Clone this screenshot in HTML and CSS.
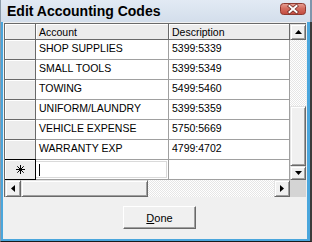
FILE: index.html
```html
<!DOCTYPE html>
<html lang="en">
<head>
	<meta charset="UTF-8">
	<title>Edit Accounting Codes</title>
	<link rel="stylesheet" href="styles.css">
</head>
<body>

<div class="window">
	<div class="titlebar">
		<span class="title">Edit Accounting Codes</span>
		<span class="close">
			<svg width="26" height="12" viewBox="0 0 26 12">
				<defs>
					<linearGradient id="cg" x1="0" y1="0" x2="0" y2="1">
						<stop offset="0" stop-color="#e8a296"/>
						<stop offset="0.45" stop-color="#d46d60"/>
						<stop offset="1" stop-color="#c24a3e"/>
					</linearGradient>
				</defs>
				<rect x="0.5" y="0.5" width="25" height="11" rx="3" fill="url(#cg)" stroke="#8e3a31"/>
				<path d="M9.5 3 L16.5 9 M16.5 3 L9.5 9" stroke="#6b2a24" stroke-width="3.4" stroke-linecap="square"/>
				<path d="M9.5 3 L16.5 9 M16.5 3 L9.5 9" stroke="#fff" stroke-width="2" stroke-linecap="square"/>
			</svg>
		</span>
	</div>

	<div class="frame-outer">
		<div class="frame">

			<div class="grid">
				<div class="grid-main">
					<div class="table">
						<div class="row head">
							<div class="sel"></div>
							<div class="cell">Account</div>
							<div class="cell">Description</div>
						</div>
						<div class="row">
							<div class="sel"></div>
							<div class="cell">SHOP SUPPLIES</div>
							<div class="cell">5399:5339</div>
						</div>
						<div class="row">
							<div class="sel"></div>
							<div class="cell">SMALL TOOLS</div>
							<div class="cell">5399:5349</div>
						</div>
						<div class="row">
							<div class="sel"></div>
							<div class="cell">TOWING</div>
							<div class="cell">5499:5460</div>
						</div>
						<div class="row">
							<div class="sel"></div>
							<div class="cell">UNIFORM/LAUNDRY</div>
							<div class="cell">5399:5359</div>
						</div>
						<div class="row">
							<div class="sel"></div>
							<div class="cell">VEHICLE EXPENSE</div>
							<div class="cell">5750:5669</div>
						</div>
						<div class="row">
							<div class="sel"></div>
							<div class="cell">WARRANTY EXP</div>
							<div class="cell">4799:4702</div>
						</div>
						<div class="row new">
							<div class="sel">
								<svg width="9" height="9" viewBox="0 0 9 9">
									<path d="M4.5 0 V9 M0 4.5 H9 M1.3 1.3 L7.7 7.7 M7.7 1.3 L1.3 7.7" stroke="#000" stroke-width="1"/>
								</svg>
							</div>
							<div class="cell"><div class="edit"><span class="caret"></span></div></div>
							<div class="cell"></div>
						</div>
					</div>

					<div class="vscroll">
						<div class="sbtn up">
							<svg width="7" height="4" viewBox="0 0 7 4"><polygon points="3.5,0 7,4 0,4" fill="#000"/></svg>
						</div>
						<div class="track vtrack1"></div>
						<div class="thumb vthumb"></div>
						<div class="sbtn down">
							<svg width="7" height="4" viewBox="0 0 7 4"><polygon points="0,0 7,0 3.5,4" fill="#000"/></svg>
						</div>
					</div>
				</div>

				<div class="grid-foot">
					<div class="hscroll">
						<div class="sbtn left">
							<svg width="4" height="7" viewBox="0 0 4 7"><polygon points="4,0 4,7 0,3.5" fill="#000"/></svg>
						</div>
						<div class="thumb hthumb"></div>
						<div class="track htrack"></div>
						<div class="sbtn right">
							<svg width="4" height="7" viewBox="0 0 4 7"><polygon points="0,0 4,3.5 0,7" fill="#000"/></svg>
						</div>
					</div>
					<div class="corner"></div>
				</div>
			</div>

			<div class="actions">
				<button class="btn"><u>D</u>one</button>
			</div>

		</div>
	</div>
</div>

</body>
</html>
```

FILE: styles.css
```css
* {
	box-sizing: border-box;
}
body {
	margin: 0;
	font-family: 'Liberation Sans', Arial, sans-serif;
	color: #000;
}
.window {
	width: 312px;
	height: 242px;
	display: flex;
	flex-direction: column;
	background: #f0f0f0;
}
.titlebar {
	height: 22px;
	display: flex;
	align-items: flex-start;
	justify-content: space-between;
	background: linear-gradient(#e2eaf4, #d3deeb);
	border-left: 1px solid #8d9cab;
	border-right: 2px solid #7f95ab;
}
.title {
	font-size: 14px;
	font-weight: bold;
	line-height: 22px;
	padding-left: 6px;
}
.close {
	display: flex;
	margin: 3px 4px 0 0;
}
.frame-outer {
	flex: 1;
	display: flex;
	border-left: 1px solid #8d9cab;
	border-right: 2px solid #3b3b3b;
	border-bottom: 1px solid #1a1a1a;
}
.frame {
	flex: 1;
	display: flex;
	flex-direction: column;
	background: #f0f0f0;
	border: solid #4aa6dc;
	border-width: 0 3px 2px 2px;
	padding: 1px 1px 0 1px;
}

/* grid */
.grid {
	border-top: 1px solid #696969;
	border-left: 1px solid #696969;
}
.grid-main {
	display: flex;
}
.table {
	width: 285px;
}
.row {
	display: grid;
	grid-template-columns: 31px 133px 121px;
	height: 20px;
}
.row.head {
	height: 16px;
}
.sel {
	background: #ececec;
	border-right: 1px solid #696969;
	border-bottom: 1px solid #696969;
	box-shadow: inset 1px 1px #fff;
	display: flex;
	align-items: center;
	justify-content: center;
}
.cell {
	background: #fff;
	border-right: 1px solid #a0a0a0;
	border-bottom: 1px solid #a0a0a0;
	font-size: 10.5px;
	line-height: 13px;
	padding: 2px 3px 0;
	white-space: nowrap;
	overflow: hidden;
}
.head .cell {
	background: #ececec;
	border-right-color: #696969;
	border-bottom-color: #696969;
	box-shadow: inset 1px 1px #fff;
	padding-top: 2px;
}
.new .sel {
	border-right-color: #000;
	border-bottom-color: #000;
	box-shadow: inset 1px 1px #fff, 0 -1px #000;
}
.new .cell:nth-child(2) {
	padding: 1px 1px 0 0;
}
.edit {
	height: 17px;
	background: #fff;
	border: 1px solid #dadada;
	border-left: 0;
	padding: 2px 0 0 3px;
}
.caret {
	display: block;
	width: 1px;
	height: 12px;
	background: #000;
}

/* scrollbars */
.vscroll {
	width: 16px;
	display: flex;
	flex-direction: column;
}
.sbtn,
.thumb {
	background: #f0f0f0;
	border: 1px solid;
	border-color: #e3e3e3 #696969 #696969 #e3e3e3;
	box-shadow: inset 1px 1px #fff, inset -1px -1px #a0a0a0;
	display: flex;
	align-items: center;
	justify-content: center;
}
.track {
	background: repeating-conic-gradient(#fff 0 25%, #e6e6e6 0 50%) 0 0 / 2px 2px;
}
.up {
	height: 16px;
}
.vtrack1 {
	height: 66px;
}
.vthumb {
	height: 60px;
}
.down {
	height: 14px;
}
.grid-foot {
	display: flex;
	height: 17px;
}
.hscroll {
	width: 285px;
	display: flex;
}
.left,
.right {
	width: 16px;
}
.hthumb {
	width: 127px;
}
.htrack {
	width: 126px;
}
.corner {
	width: 16px;
	background: #d4d4d4;
}

/* buttons */
.actions {
	padding: 9px 0 0 119px;
}
.btn {
	width: 73px;
	height: 23px;
	background: #f0f0f0;
	border: 1px solid;
	border-color: #fff #696969 #696969 #fff;
	box-shadow: inset -1px -1px #a0a0a0;
	font-family: 'Liberation Sans', Arial, sans-serif;
	font-size: 11px;
	color: #000;
	padding: 0;
}
```
